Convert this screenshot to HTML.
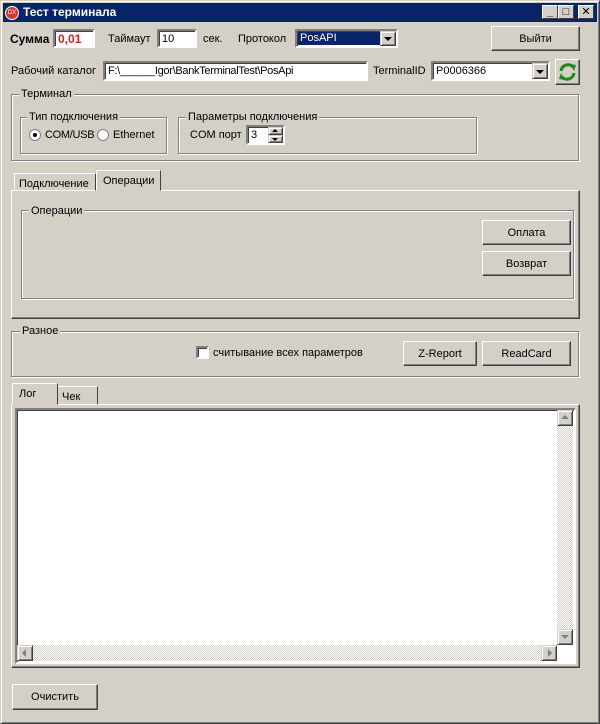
<!DOCTYPE html>
<html><head><meta charset="utf-8"><style>
*{box-sizing:border-box;margin:0;padding:0}
body{width:600px;height:724px;background:#d4d0c8;font-family:"Liberation Sans","DejaVu Sans",sans-serif;font-size:11px;color:#000;position:relative;overflow:hidden}
.a{position:absolute}
.win{left:0;top:0;width:600px;height:724px;border:1px solid;border-color:#d4d0c8 #404040 #404040 #d4d0c8;box-shadow:inset 1px 1px #fff,inset -1px -1px #808080}
.title{left:3px;top:3px;width:594px;height:19px;background:#0a246a;color:#fff;font-weight:bold;font-size:12px;line-height:19px;padding-left:20px}
.tb{top:5px;width:16px;height:14px;background:#d4d0c8;border:1px solid;border-color:#fff #404040 #404040 #fff;font-size:11px;line-height:12px;text-align:center;color:#000;font-weight:bold}
.edit{background:#fff;border:2px solid;border-color:#808080 #fff #fff #808080;box-shadow:inset 1px 1px #404040;padding-left:3px;padding-top:1px;line-height:15px}
.btn{background:#d4d0c8;border:1px solid;border-color:#fff #404040 #404040 #fff;box-shadow:inset -1px -1px #808080;text-align:center}
.grp{border:1px solid #808080;box-shadow:1px 1px #fff,inset 1px 1px #fff}
.lbl{background:#d4d0c8;padding:0 2px;line-height:12px}
.arrow{width:16px;height:16px;background:#d4d0c8;border:1px solid;border-color:#d4d0c8 #404040 #404040 #d4d0c8;box-shadow:inset 1px 1px #fff,inset -1px -1px #808080}
.tri{width:0;height:0;border-left:4px solid transparent;border-right:4px solid transparent;border-top:4px solid #000}
.chk{background:repeating-conic-gradient(#fff 0 25%,#d4d0c8 0 50%) 0 0/2px 2px}
.n{letter-spacing:-0.3px}
</style></head><body>
<div class="a win"></div>
<div class="a title">Тест терминала</div>
<div class="a" style="left:5px;top:6px;width:14px;height:14px;border-radius:50%;background:#d33;border:1px solid #fff;color:#fff;font-size:6px;line-height:12px;text-align:center">DX</div>
<div class="a tb" style="left:542px">_</div>
<div class="a tb" style="left:558px">□</div>
<div class="a tb" style="left:578px">✕</div>

<div class="a" style="left:10px;top:32px;font-weight:bold;font-size:12px">Сумма</div>
<div class="a edit" style="left:53px;top:29px;width:42px;height:19px;color:#e02020;font-weight:bold;font-size:12px">0,01</div>
<div class="a" style="left:108px;top:33px">Таймаут</div>
<div class="a edit" style="left:157px;top:29px;width:40px;height:19px">10</div>
<div class="a" style="left:203px;top:33px">сек.</div>
<div class="a" style="left:238px;top:33px">Протокол</div>
<div class="a edit" style="left:295px;top:29px;width:103px;height:19px;padding:1px"><div style="background:#0a246a;color:#fff;height:13px;width:83px;line-height:13px;padding-left:2px">PosAPI</div></div>
<div class="a arrow" style="left:380px;top:31px;width:16px;height:15px"><div class="tri a" style="left:3px;top:5px"></div></div>
<div class="a btn" style="left:491px;top:26px;width:89px;height:25px;line-height:24px">Выйти</div>

<div class="a" style="left:11px;top:65px">Рабочий каталог</div>
<div class="a edit n" style="left:103px;top:61px;width:265px;height:20px">F:\______Igor\BankTerminalTest\PosApi</div>
<div class="a" style="left:373px;top:65px">TerminalID</div>
<div class="a edit" style="left:431px;top:61px;width:119px;height:20px">P0006366</div>
<div class="a arrow" style="left:532px;top:63px"><div class="tri a" style="left:3px;top:6px"></div></div>
<div class="a btn" style="left:555px;top:59px;width:25px;height:26px">
<svg width="23" height="24" viewBox="0 0 23 24"><path d="M5 11 A7 7 0 0 1 17 7" stroke="#1a8a1a" stroke-width="3" fill="none"/><path d="M14 4 L20 5 L18 11Z" fill="#1a8a1a"/><path d="M18 13 A7 7 0 0 1 6 17" stroke="#1a8a1a" stroke-width="3" fill="none"/><path d="M9 20 L3 19 L5 13Z" fill="#1a8a1a"/></svg></div>

<div class="a grp" style="left:11px;top:94px;width:568px;height:67px"></div>
<div class="a lbl" style="left:19px;top:88px">Терминал</div>
<div class="a grp" style="left:20px;top:117px;width:147px;height:37px"></div>
<div class="a lbl" style="left:27px;top:111px">Тип подключения</div>
<div class="a" style="left:29px;top:129px;width:12px;height:12px;border-radius:50%;background:#fff;border:1px solid #808080"><div class="a" style="left:3px;top:3px;width:4px;height:4px;border-radius:50%;background:#000"></div></div>
<div class="a n" style="left:45px;top:129px">COM/USB</div>
<div class="a" style="left:97px;top:129px;width:12px;height:12px;border-radius:50%;background:#fff;border:1px solid #808080"></div>
<div class="a" style="left:113px;top:129px">Ethernet</div>
<div class="a grp" style="left:178px;top:117px;width:299px;height:37px"></div>
<div class="a lbl" style="left:186px;top:111px">Параметры подключения</div>
<div class="a" style="left:190px;top:129px">COM порт</div>
<div class="a edit" style="left:246px;top:125px;width:39px;height:20px">3</div>
<div class="a arrow" style="left:268px;top:127px;width:15px;height:8px"><div class="a" style="left:3px;top:1px;border:3px solid transparent;border-bottom:3px solid #000;border-top:0"></div></div>
<div class="a arrow" style="left:268px;top:135px;width:15px;height:8px"><div class="a" style="left:3px;top:2px;border:3px solid transparent;border-top:3px solid #000;border-bottom:0"></div></div>

<div class="a" style="left:11px;top:190px;width:569px;height:129px;border:1px solid;border-color:#fff #404040 #404040 #fff;box-shadow:inset -1px -1px #808080"></div>
<div class="a" style="left:14px;top:173px;width:82px;height:18px;border:1px solid;border-color:#fff #404040 transparent #fff;padding:4px 0 0 4px">Подключение</div>
<div class="a" style="left:96px;top:170px;width:65px;height:21px;border:1px solid;border-color:#fff #404040 transparent #fff;background:#d4d0c8;padding:4px 0 0 6px">Операции</div>
<div class="a grp" style="left:21px;top:210px;width:553px;height:89px"></div>
<div class="a lbl" style="left:29px;top:205px">Операции</div>
<div class="a btn" style="left:482px;top:220px;width:89px;height:25px;line-height:24px">Оплата</div>
<div class="a btn" style="left:482px;top:251px;width:89px;height:25px;line-height:24px">Возврат</div>

<div class="a grp" style="left:11px;top:331px;width:568px;height:46px"></div>
<div class="a lbl" style="left:20px;top:325px">Разное</div>
<div class="a edit" style="left:196px;top:346px;width:13px;height:13px"></div>
<div class="a" style="left:213px;top:347px">считывание всех параметров</div>
<div class="a btn" style="left:403px;top:341px;width:74px;height:25px;line-height:24px">Z-Report</div>
<div class="a btn" style="left:482px;top:341px;width:89px;height:25px;line-height:24px">ReadCard</div>

<div class="a" style="left:11px;top:404px;width:569px;height:264px;border:1px solid;border-color:#fff #404040 #404040 #fff;box-shadow:inset -1px -1px #808080"></div>
<div class="a" style="left:57px;top:386px;width:41px;height:19px;border:1px solid;border-color:#fff #404040 transparent #fff;padding:4px 0 0 4px">Чек</div>
<div class="a" style="left:12px;top:383px;width:46px;height:22px;border:1px solid;border-color:#fff #404040 transparent #fff;background:#d4d0c8;padding:4px 0 0 6px">Лог</div>
<div class="a" style="left:15px;top:408px;width:561px;height:256px;background:#fff;border:2px solid;border-color:#808080 #fff #fff #808080;box-shadow:inset 1px 1px #404040"></div>
<div class="a chk" style="left:557px;top:410px;width:16px;height:235px"></div>
<div class="a chk" style="left:17px;top:645px;width:540px;height:16px"></div>
<div class="a arrow" style="left:557px;top:410px"><div class="a" style="left:3px;top:4px;border:4px solid transparent;border-bottom:4px solid #808080;border-top:0"></div></div>
<div class="a arrow" style="left:557px;top:629px"><div class="a tri" style="left:3px;top:5px;border-top-color:#808080"></div></div>
<div class="a arrow" style="left:17px;top:645px"><div class="a" style="left:4px;top:3px;border:4px solid transparent;border-right:4px solid #808080;border-left:0"></div></div>
<div class="a arrow" style="left:541px;top:645px"><div class="a" style="left:6px;top:3px;border:4px solid transparent;border-left:4px solid #808080;border-right:0"></div></div>

<div class="a btn" style="left:12px;top:684px;width:86px;height:26px;line-height:25px">Очистить</div>
</body></html>
